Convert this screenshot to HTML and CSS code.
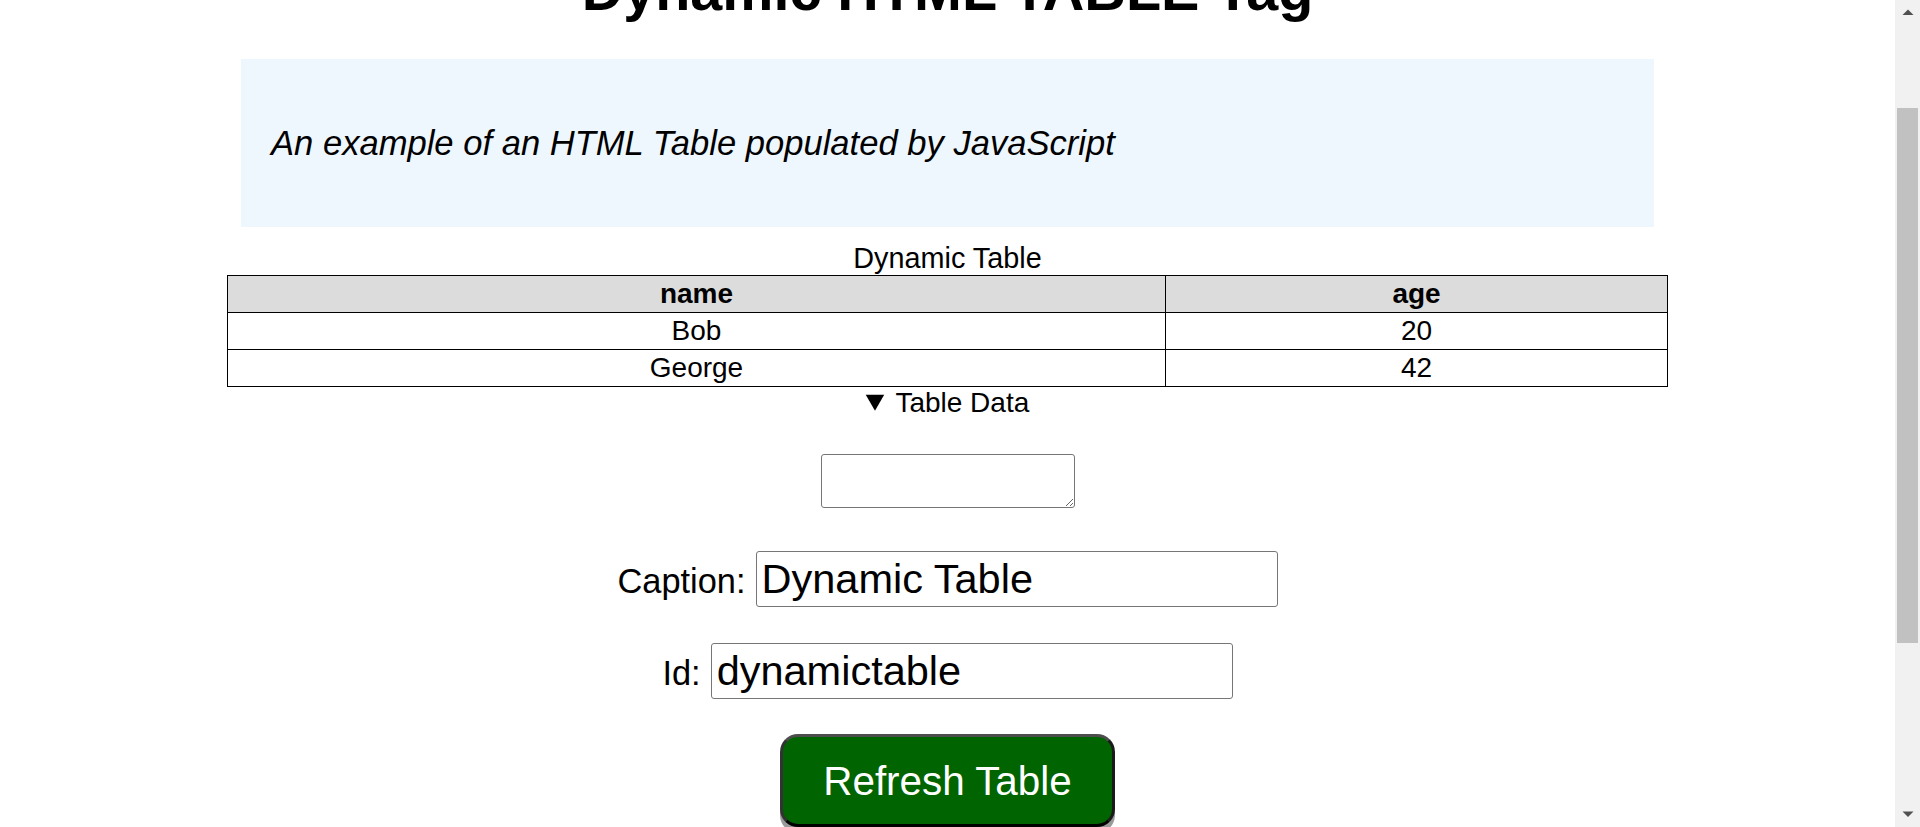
FILE: index.html
```html
<!DOCTYPE html>
<html lang="en">
<head>
<meta charset="utf-8">
<title>Dynamic HTML TABLE Tag</title>
<link rel="stylesheet" href="styles.css">
</head>
<body>
<div class="screen">
  <main class="page">
    <h1 class="title">Dynamic HTML TABLE Tag</h1>
    <div class="intro">
      <p class="intro-text">An example of an HTML Table populated by JavaScript</p>
    </div>
    <table class="data-table" id="dynamictable">
      <caption class="data-caption">Dynamic Table</caption>
      <colgroup><col class="col-name"><col class="col-age"></colgroup>
      <thead>
        <tr><th>name</th><th>age</th></tr>
      </thead>
      <tbody>
        <tr><td>Bob</td><td>20</td></tr>
        <tr><td>George</td><td>42</td></tr>
      </tbody>
    </table>
    <details class="table-data" open>
      <summary class="table-data-summary">Table Data</summary>
      <textarea class="table-data-text"></textarea>
    </details>
    <div class="field field-caption">
      <label class="field-label" for="caption">Caption:</label>
      <input class="field-input" id="caption" type="text" value="Dynamic Table">
    </div>
    <div class="field field-id">
      <label class="field-label" for="tid">Id:</label>
      <input class="field-input" id="tid" type="text" value="dynamictable">
    </div>
    <button class="refresh" type="button">Refresh Table</button>
  </main>
  <aside class="scrollbar" aria-hidden="true">
    <div class="sb-button">
      <svg width="12" height="7" viewBox="0 0 12 7"><polygon points="0.5,6 11.5,6 6,0.5" fill="#505050"/></svg>
    </div>
    <div class="sb-track">
      <div class="sb-thumb"></div>
    </div>
    <div class="sb-button">
      <svg width="12" height="7" viewBox="0 0 12 7"><polygon points="0.5,0.5 11.5,0.5 6,6" fill="#505050"/></svg>
    </div>
  </aside>
</div>
</body>
</html>
```
FILE: styles.css
```css
html, body {
  margin: 0;
  padding: 0;
  background: #fff;
}

.screen {
  display: flex;
  height: 827px;
  overflow: hidden;
}

.page {
  flex: 1;
  min-width: 0;
  overflow: hidden;
  text-align: center;
  font-family: "Liberation Sans", Arial, sans-serif;
  font-size: 28px;
  color: #000;
}

.title {
  font-size: 57.5px;
  font-weight: bold;
  line-height: 64px;
  margin: -42px 0 37px;
}

.intro {
  width: 1413px;
  margin: 0 auto 15px;
  box-sizing: border-box;
  padding: 64px 30px;
  background: #eff7fe;
  text-align: left;
}

.intro-text {
  margin: 0;
  font-style: italic;
  font-size: 34.6px;
  line-height: 40px;
}

.data-table {
  width: 1441px;
  margin: 0 auto;
  border-collapse: collapse;
  border: 1px solid #000;
}

.data-caption {
  font-size: 28.8px;
  line-height: 33px;
}

.col-name {
  width: 938px;
}

.data-table th,
.data-table td {
  border: 1px solid #000;
  padding: 2px;
  line-height: 32px;
  text-align: center;
}

.data-table th {
  background: #dcdcdc;
  font-weight: bold;
}

.table-data-summary {
  line-height: 32px;
  cursor: pointer;
}

.table-data-text {
  display: block;
  width: 254px;
  height: 54px;
  box-sizing: border-box;
  margin: 35px auto 43px;
  border: 1px solid #767676;
  border-radius: 3px;
  background: #fff;
}

.field {
  display: flex;
  justify-content: center;
  align-items: baseline;
  gap: 10px;
}

.field-caption {
  margin-bottom: 36px;
}

.field-id {
  margin-bottom: 35px;
}

.field-label {
  font-size: 34.4px;
}

.field-input {
  width: 522px;
  height: 56px;
  box-sizing: border-box;
  padding: 0 5px;
  font-family: "Liberation Sans", Arial, sans-serif;
  font-size: 41.5px;
  color: #000;
  border: 1px solid #767676;
  border-radius: 3px;
  background: #fff;
}

.refresh {
  display: block;
  margin: 0 auto;
  padding: 21px 40px 19px;
  font-family: "Liberation Sans", Arial, sans-serif;
  font-size: 40.4px;
  color: #fff;
  background: #006400;
  border: 3px solid;
  border-color: #4d4d4d #1a1a1a #000 #333;
  border-radius: 18px;
  box-shadow: 0 6px 0 #9a9a9a;
}

.scrollbar {
  flex: 0 0 25px;
  display: flex;
  flex-direction: column;
  background: #f1f1f1;
}

.sb-button {
  height: 25px;
  display: flex;
  align-items: center;
  justify-content: center;
}

.sb-track {
  flex: 1;
  padding: 83px 2px 0;
}

.sb-thumb {
  height: 535px;
  background: #c1c1c1;
}
```
